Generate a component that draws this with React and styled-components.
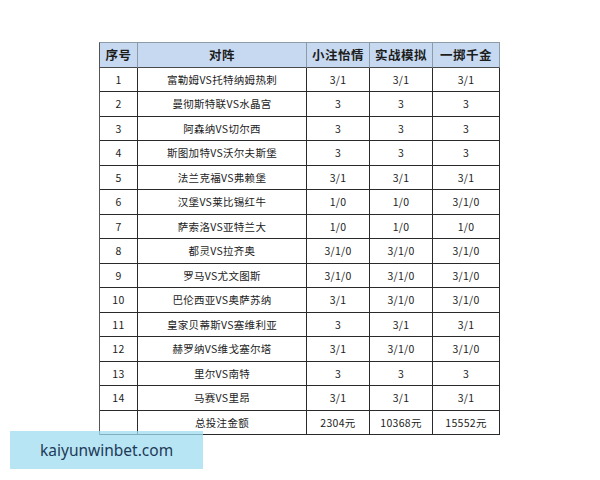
import React from "react";
import styled, { createGlobalStyle } from "styled-components";

const Global = createGlobalStyle`
  html, body {
    margin: 0;
    padding: 0;
    background: #ffffff;
  }
  body {
    font-family: "Noto Sans CJK SC", "Noto Sans", sans-serif;
  }
`;

const Page = styled.div`
  position: relative;
  width: 600px;
  height: 480px;
  padding: 42px 0 0 99px;
  box-sizing: border-box;
`;

const Grid = styled.div`
  display: grid;
  grid-template-columns: 38px 169px 63px 63px 67px;
  grid-auto-rows: 24.5px;
  width: 401px;
  border-top: 1px solid #8d9aa8;
  border-left: 1px solid #555;
  box-sizing: border-box;
`;

const Cell = styled.div`
  display: flex;
  align-items: center;
  justify-content: center;
  border-right: 1px solid ${(p) => (p.$head ? "#8d9aa8" : "#2a2a2a")};
  border-bottom: 1px solid ${(p) => (p.$head ? "#4a4a4a" : "#2a2a2a")};
  background: ${(p) => (p.$head ? "#c6d9f0" : "#ffffff")};
  color: #1c1c1c;
  font-size: ${(p) => (p.$head ? "12.5px" : "10.5px")};
  font-weight: ${(p) => (p.$head ? 700 : 400)};
  letter-spacing: ${(p) => (p.$head ? "0.5px" : "0.3px")};
  white-space: nowrap;
  box-sizing: border-box;
`;

const Watermark = styled.div`
  position: absolute;
  left: 10px;
  top: 431px;
  width: 193px;
  height: 38px;
  background: rgba(160, 220, 240, 0.75);
  display: flex;
  align-items: center;
  padding-left: 30px;
  box-sizing: border-box;
  font-family: "Noto Sans", sans-serif;
  font-size: 15.5px;
  color: #213a58;
`;

const head = ["序号", "对阵", "小注怡情", "实战模拟", "一掷千金"];

const rows = [
  ["1", "富勒姆VS托特纳姆热刺", "3/1", "3/1", "3/1"],
  ["2", "曼彻斯特联VS水晶宫", "3", "3", "3"],
  ["3", "阿森纳VS切尔西", "3", "3", "3"],
  ["4", "斯图加特VS沃尔夫斯堡", "3", "3", "3"],
  ["5", "法兰克福VS弗赖堡", "3/1", "3/1", "3/1"],
  ["6", "汉堡VS莱比锡红牛", "1/0", "1/0", "3/1/0"],
  ["7", "萨索洛VS亚特兰大", "1/0", "1/0", "1/0"],
  ["8", "都灵VS拉齐奥", "3/1/0", "3/1/0", "3/1/0"],
  ["9", "罗马VS尤文图斯", "3/1/0", "3/1/0", "3/1/0"],
  ["10", "巴伦西亚VS奥萨苏纳", "3/1", "3/1/0", "3/1/0"],
  ["11", "皇家贝蒂斯VS塞维利亚", "3", "3/1", "3/1"],
  ["12", "赫罗纳VS维戈塞尔塔", "3/1", "3/1/0", "3/1/0"],
  ["13", "里尔VS南特", "3", "3", "3"],
  ["14", "马赛VS里昂", "3/1", "3/1", "3/1"],
  ["", "总投注金额", "2304元", "10368元", "15552元"],
];

export default function App() {
  return (
    <Page>
      <Global />
      <Grid>
        {head.map((h) => (
          <Cell key={h} $head>
            {h}
          </Cell>
        ))}
        {rows.map((r, i) =>
          r.map((c, j) => <Cell key={i + "-" + j}>{c}</Cell>)
        )}
      </Grid>
      <Watermark>kaiyunwinbet.com</Watermark>
    </Page>
  );
}
